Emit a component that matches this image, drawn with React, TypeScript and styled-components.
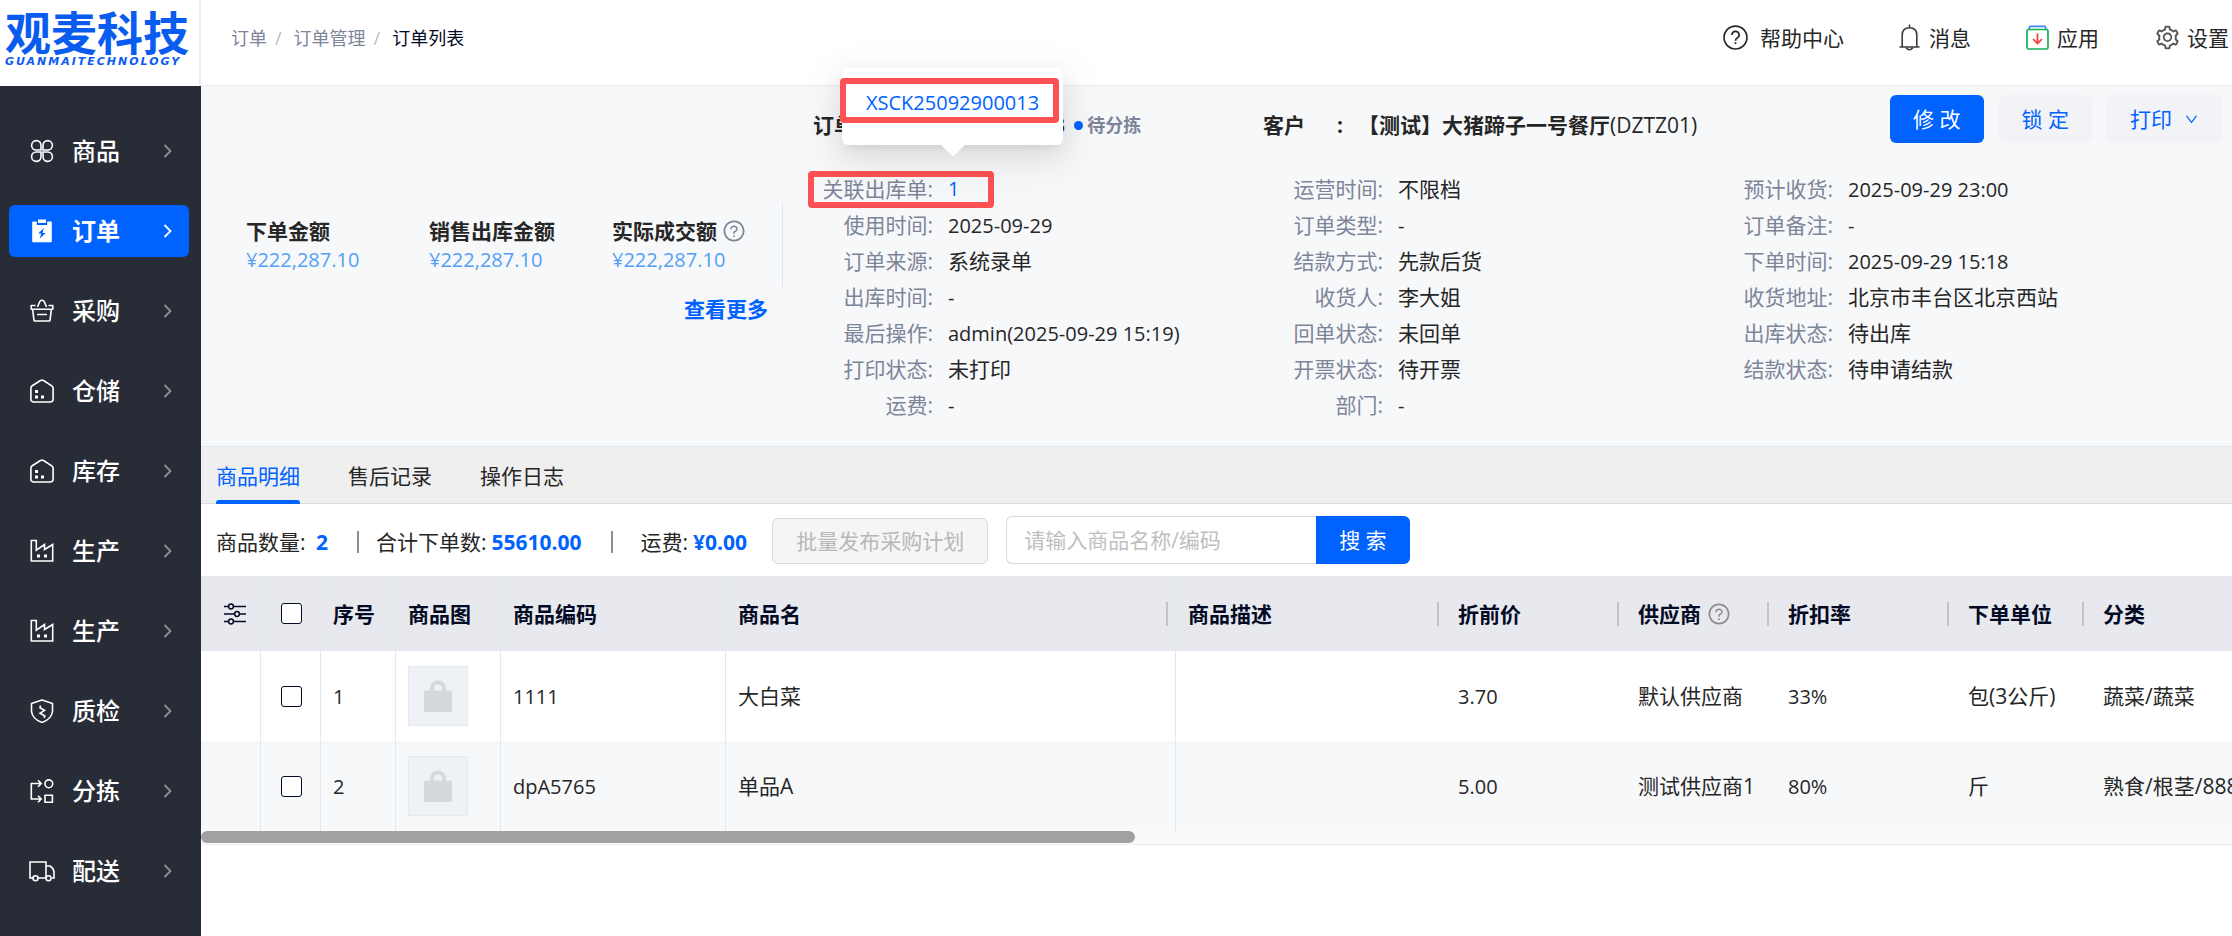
import React from 'react';
import styled, { createGlobalStyle, css } from 'styled-components';
import { AiOutlineDown, AiOutlineQuestionCircle, AiOutlineSetting } from 'react-icons/ai';

const BLUE = '#0062ff';
const INK = '#262626';
const MUTED = '#7d8599';
const NAVY = '#030a24';
const RED = '#fe5153';

const GlobalStyle = createGlobalStyle`
  *, *::before, *::after { box-sizing: border-box; }
  body {
    margin: 0;
    background: #fff;
    color: ${INK};
    font: 21px/28px 'Open Sans', 'Noto Sans CJK SC', sans-serif;
    overflow-x: hidden;
  }
  button, input { font: inherit; }
  a { color: inherit; text-decoration: none; }
`;

const Shell = styled.div`
  display: grid;
  grid-template-columns: 201px minmax(0, 1fr);
  min-height: 100vh;
`;

/* ---------- sidebar ---------- */

const Sidebar = styled.aside`
  display: flex;
  flex-direction: column;
  background: #282c37;
`;

const Logo = styled.a`
  display: flex;
  flex-direction: column;
  height: 86px;
  padding: 6px 0 0 5px;
  background: #fff;
  border-right: 2px solid #e8ebf3;
  color: #0a5cf0;
  white-space: nowrap;
`;

const LogoName = styled.span`
  font: 700 46px/48px 'Noto Sans CJK SC', sans-serif;
`;

const LogoLatin = styled.span`
  font: italic 700 11px/16px 'DejaVu Sans', sans-serif;
  letter-spacing: 2px;
`;

const Menu = styled.nav`
  display: flex;
  flex-direction: column;
  gap: 28px;
  padding: 39px 12px 39px 9px;
`;

const MenuItem = styled.a<{ $active?: boolean }>`
  display: flex;
  align-items: center;
  height: 52px;
  padding: 0 16px 0 21px;
  border-radius: 6px;
  color: #fff;
  font-size: 24px;
  font-weight: 500;
  > svg { color: #8f9197; }
  ${(p) =>
    p.$active &&
    css`
      background: ${BLUE};
      font-weight: 700;
      > svg { color: #fff; }
    `}
`;

const IconSlot = styled.span`
  display: flex;
  justify-content: center;
  width: 24px;
  svg { flex: none; }
`;

const MenuText = styled.span`
  flex: 1;
  padding-left: 18px;
`;

/* ---------- top bar ---------- */

const Main = styled.main`
  display: flex;
  flex-direction: column;
  min-width: 0;
`;

const TopBar = styled.header`
  display: flex;
  align-items: center;
  justify-content: space-between;
  height: 86px;
  padding: 0 3px 10px 30px;
  border-bottom: 1px solid #e8ebf0;
  white-space: nowrap;
`;

const Crumbs = styled.nav`
  display: flex;
  gap: 12px;
  font-size: 18px;
  color: ${MUTED};
`;

const Slash = styled.span`
  margin-left: -4px;
  color: #b9bdc7;
`;

const CurrentCrumb = styled.span`
  color: ${NAVY};
`;

const Tools = styled.div`
  display: flex;
  gap: 55px;
`;

const Tool = styled.a<{ $gap: number }>`
  display: flex;
  align-items: center;
  gap: ${(p) => p.$gap}px;
`;

/* ---------- order summary ---------- */

const Summary = styled.section`
  display: grid;
  grid-template-columns: 582px minmax(0, 1fr);
  background: #f7f8fa;
  border-bottom: 1px solid #e2e6f0;
`;

const Totals = styled.div`
  padding-top: 116px;
`;

const TotalRow = styled.div`
  display: grid;
  grid-template-columns: 183px 183px 1fr;
  padding: 15px 0 12px 45px;
  border-right: 1px solid #e2e6f0;
`;

const TotalTitle = styled.div`
  display: flex;
  align-items: center;
  gap: 5px;
  height: 28px;
  font-weight: 700;
  svg { color: ${MUTED}; }
`;

const TotalValue = styled.div`
  font-size: 20px;
  line-height: 30px;
  color: #559ff5;
`;

const MoreLink = styled.a`
  display: block;
  padding: 8px 15px 0 0;
  text-align: right;
  font-weight: 700;
  color: ${BLUE};
`;

const Details = styled.div`
  display: grid;
  grid-template-columns: minmax(0, 450px) minmax(0, 450px) minmax(0, 1fr);
  grid-template-rows: 85px;
  padding: 0 0 23px 15px;
  white-space: nowrap;
`;

const Heading = styled.div`
  display: flex;
  align-items: center;
  height: 78px;
  padding-left: 15px;
  font-weight: 700;
`;

const HeadingLabel = styled.span`
  width: 74px;
`;

const HeadingColon = styled.span`
  width: 21px;
`;

const Code = styled.span`
  font-weight: 500;
`;

const Status = styled.span`
  display: flex;
  align-items: center;
  gap: 4px;
  padding-left: 9px;
  font-size: 18px;
  color: ${MUTED};
  &::before {
    content: '';
    width: 9px;
    height: 9px;
    border-radius: 50%;
    background: ${BLUE};
  }
`;

const Actions = styled.div`
  display: flex;
  justify-content: flex-end;
  gap: 15px;
  padding: 9px 10px 0 0;
`;

const Button = styled.button<{ $kind: 'primary' | 'soft' | 'search' }>`
  display: flex;
  align-items: center;
  justify-content: center;
  gap: 12px;
  height: 48px;
  padding: 0 23px;
  border: 0;
  border-radius: ${(p) => (p.$kind === 'search' ? '0 6px 6px 0' : '6px')};
  background: ${(p) => (p.$kind === 'soft' ? '#f1f3f6' : BLUE)};
  color: ${(p) => (p.$kind === 'soft' ? BLUE : '#fff')};
  white-space: nowrap;
`;

const FieldList = styled.dl`
  margin: 0;
`;

const Field = styled.div`
  position: relative;
  display: grid;
  grid-template-columns: 135px minmax(0, 1fr);
  gap: 15px;
  height: 36px;
  line-height: 36px;
  dt { text-align: right; color: ${MUTED}; }
  dd { margin: 0; }
`;

const Latin = styled.span`
  font-size: 20px;
`;

const RelatedLink = styled.div`
  position: relative;
  width: fit-content;
  height: 36px;
  color: ${BLUE};
  font-size: 20px;
`;

const RowMark = styled.span`
  position: absolute;
  inset: 0 auto auto 10px;
  width: 186px;
  height: 37px;
  border: 6px solid ${RED};
  border-radius: 4px;
`;

const Popover = styled.div`
  position: absolute;
  z-index: 2;
  left: -106px;
  bottom: 62px;
  width: 221px;
  height: 77px;
  padding: 17px 0 0 24px;
  border-radius: 6px;
  background: #fff;
  box-shadow: 0 9px 24px rgba(0, 0, 0, 0.08), 0 5px 9px -6px rgba(0, 0, 0, 0.12),
    0 14px 42px 12px rgba(0, 0, 0, 0.05);
  &::before {
    content: '';
    position: absolute;
    left: 50%;
    bottom: -8px;
    width: 18px;
    height: 18px;
    border-radius: 2px;
    background: #fff;
    transform: translateX(-50%) rotate(45deg);
  }
  a { position: relative; display: block; line-height: 36px; }
`;

const PopoverMark = styled.span`
  position: absolute;
  top: 10px;
  left: -2px;
  width: 219px;
  height: 45px;
  border: 6px solid ${RED};
  border-radius: 4px;
`;

/* ---------- tabs and toolbar ---------- */

const Tabs = styled.div`
  display: flex;
  gap: 48px;
  height: 57px;
  padding: 0 15px;
  background: #efefef;
  border-bottom: 1px solid #dcdcdc;
`;

const Tab = styled.button<{ $active?: boolean }>`
  position: relative;
  height: 57px;
  padding: 0;
  border: 0;
  background: none;
  color: ${(p) => (p.$active ? BLUE : INK)};
  &::after {
    content: '';
    position: absolute;
    inset: auto 0 0;
    height: 4px;
    border-radius: 3px 3px 0 0;
    background: ${(p) => (p.$active ? BLUE : 'transparent')};
  }
`;

const Toolbar = styled.div`
  display: flex;
  align-items: center;
  height: 72px;
  padding: 0 15px;
  white-space: nowrap;
`;

const Figures = styled.div`
  display: flex;
  align-items: center;
  padding-top: 3px;
`;

const Figure = styled.span`
  display: flex;
  align-items: baseline;
  gap: 5px;
`;

const Amount = styled.strong`
  color: ${BLUE};
`;

const Bar = styled.i<{ $after: number }>`
  width: 2px;
  height: 22px;
  margin: 0 ${(p) => p.$after}px 0 29px;
  background: #8a8f96;
`;

const BatchButton = styled.button`
  height: 46px;
  margin: 2px 18px 0 25px;
  padding: 0 23px;
  border: 1px solid #d9d9d9;
  border-radius: 6px;
  background: #f5f5f5;
  color: #b8b8b8;
`;

const SearchBox = styled.form`
  display: flex;
`;

const SearchInput = styled.input`
  width: 310px;
  height: 48px;
  padding: 0 17px;
  border: 1px solid #d9d9d9;
  border-right: 0;
  border-radius: 6px 0 0 6px;
  outline: 0;
  color: ${INK};
  &::placeholder { color: #bfbfbf; opacity: 1; }
`;

/* ---------- table ---------- */

const TableWrap = styled.div`
  overflow: hidden;
  border-bottom: 1px solid #eaecf2;
  background: #fafafa;
`;

const Table = styled.table`
  width: 100%;
  table-layout: fixed;
  border-spacing: 0;
  white-space: nowrap;
  th, td { padding: 0 12px; text-align: left; overflow: hidden; }
  th { position: relative; height: 75px; background: #e8e9ee; color: ${NAVY}; font-weight: 700; }
  td { height: 90px; background: #fff; }
  tbody tr:nth-child(even) td { background: #f7f8fa; }
  th:nth-child(-n + 6), td:nth-child(-n + 6) { border-right: 1px solid #e4e8f1; }
  th:nth-child(1) { padding: 0 0 0 8px; }
  th:nth-child(2), td:nth-child(2) { padding: 0 0 0 2px; }
`;

const Handle = styled.i`
  position: absolute;
  top: 26px;
  right: 7px;
  width: 2px;
  height: 24px;
  background: #c3c4c8;
`;

const HeadText = styled.span`
  display: flex;
  align-items: center;
  gap: 6px;
  svg { color: #8c8c8c; }
`;

const Centered = styled.span`
  display: flex;
  align-items: center;
  justify-content: center;
`;

const Checkbox = styled.input`
  appearance: none;
  width: 21px;
  height: 21px;
  margin: 0;
  border: 1px solid ${NAVY};
  border-radius: 3px;
  background: #fff;
`;

const Thumb = styled.span`
  display: flex;
  align-items: center;
  justify-content: center;
  width: 60px;
  height: 60px;
  border: 1px solid #e6e9f1;
  background: #eef1f6;
`;

const ScrollThumb = styled.div`
  width: 46%;
  height: 12px;
  margin-bottom: 1px;
  border-radius: 6px;
  background: #a1a1a1;
`;

/* ---------- icons ---------- */

const Glyph = ({ children, size = 24, width = 1.6 }: { children: React.ReactNode; size?: number; width?: number }) => (
  <svg width={size} height={size} viewBox="0 0 24 24" fill="none" stroke="currentColor" strokeWidth={width} aria-hidden="true">
    {children}
  </svg>
);

const Goods = (
  <Glyph>
    <path d="M11 11H6.2A4.7 4.7 0 1 1 11 6.2zM13 11V6.2A4.7 4.7 0 1 1 17.8 11zM11 13v4.8A4.7 4.7 0 1 1 6.2 13zM13 13h4.8A4.7 4.7 0 1 1 13 17.8z" />
  </Glyph>
);

const Orders = (
  <Glyph>
    <path d="M3 2.500h3.800v3.500h10.400V2.500H21q.8 0 .8.800V22.500q0 .8-.8.800H3q-.8 0-.8-.8V3.300q0-.8.8-.8z" fill="currentColor" stroke="none" />
    <path d="M8 .5h8v3.500H8z" fill="currentColor" stroke="none" />
    <path d="M13.800 9L8.200 14.400h3l-1.400 5L15.700 14h-3.200z" fill={BLUE} stroke="none" />
  </Glyph>
);

const Purchase = (
  <Glyph>
    <path d="M5.500 6.500H1.200v3.700h1.400L4 21.300q.1.700.8.700h14.400q.7 0 .8-.7l1.400-11.100h1.400V6.500h-4.300M2.600 10.200h18.800M7 15.500h10M7.500 8L9.800 2.500q2.200-2.400 4.400 0L16.500 8" strokeLinejoin="round" />
  </Glyph>
);

const Warehouse = (
  <Glyph>
    <path d="M.9 9.200q0-1.600 1.300-2.400l8.300-5.300q1.500-.9 3 0l8.300 5.300q1.300.8 1.300 2.400V20q0 3-3 3H3.900q-3 0-3-3z" />
    <path d="M5 11h3v3H5zM5 16.500h3v3H5zM11 16.500h3v3h-3z" fill="currentColor" stroke="none" />
  </Glyph>
);

const Factory = (
  <Glyph>
    <path d="M1.300 22V1.500h5v9.700L14.500 5.500v5L22.700 5.500V22z" />
    <path d="M7 15.500h3v3H7zM14 15.500h3v3h-3z" fill="currentColor" stroke="none" />
  </Glyph>
);

const Quality = (
  <Glyph>
    <path d="M12 1l10.500 3.500V12.500Q21.500 20 12 23.500 2.500 20 1.500 12.500V4.500z" strokeLinejoin="round" />
    <path d="M10.500 6.500l-.5 2.300 4.500 2.500-4.500 3 4.800 2.700-.6 2" />
  </Glyph>
);

const Sorting = (
  <Glyph>
    <path d="M11 4.500H1.300v15.500H11M8 1.200L11.200 4.500 8 7.800M8 16.700l3.200 3.300L8 23.300" />
    <circle cx="18.800" cy="4.800" r="3.900" />
    <path d="M15 16.200h7.400v7H15z" />
  </Glyph>
);

const Delivery = (
  <svg width="26" height="24" viewBox="0 0 26 24" fill="none" stroke="currentColor" strokeWidth="1.600" aria-hidden="true">
    <path d="M4 19H1V3h16v16H9M17 7h4q4 2.500 4 7v5h-2M17 19h1" />
    <circle cx="6.500" cy="19.300" r="2.500" />
    <circle cx="19.500" cy="19.300" r="2.500" />
  </svg>
);

const Chevron = () => (
  <svg width="10" height="14" viewBox="0 0 10 14" fill="none" stroke="currentColor" strokeWidth="1.800" aria-hidden="true">
    <path d="M1.500 1l6 6-6 6" />
  </svg>
);

const Help = (
  <Glyph size={25}>
    <circle cx="12" cy="12" r="11" />
    <path d="M8.600 9.500a3.400 3.400 0 1 1 5 3q-1.600.9-1.600 2.500M12 16.500v1.800" />
  </Glyph>
);

const Bell = (
  <svg width="21" height="27" viewBox="0 0 21 27" fill="none" stroke="#3c3c3c" strokeWidth="1.600" aria-hidden="true">
    <path d="M.5 23h20M3.200 23V11.200q0-7.400 7.300-7.400t7.300 7.400V23M10.500.5v3" />
    <path d="M7 23.500q3.500 4.500 7 0" />
  </svg>
);

const Apps = (
  <svg width="23" height="25" viewBox="0 0 23 25" fill="none" strokeWidth="1.700" aria-hidden="true">
    <path d="M2.500 5L4 1.300h15L20.500 5" stroke="#3f86ff" />
    <rect x="1" y="4.500" width="21" height="19.500" rx="1.500" stroke="#12b15c" />
    <path d="M11.500 8.500v10M7 14l4.500 4.500L16 14" stroke="#fb3b3b" />
  </svg>
);

const Sliders = (
  <svg width="22" height="22" viewBox="0 0 22 22" fill="none" stroke={NAVY} strokeWidth="1.500" aria-hidden="true">
    <path d="M0 3.500h4.500M9.500 3.500H22M0 11h10.500M15.500 11H22M0 18.500h4.500M9.500 18.500H22" />
    <circle cx="7" cy="3.500" r="2.400" />
    <circle cx="13" cy="11" r="2.400" />
    <circle cx="7" cy="18.500" r="2.400" />
  </svg>
);

const Lock = () => (
  <svg width="28" height="32" viewBox="0 0 28 32" fill="none" aria-hidden="true">
    <rect y="10.500" width="28" height="21.500" rx="1" fill="#d5d9dc" />
    <path d="M8 11V8.500a6 6 0 0 1 12 0V11" stroke="#d5d9dc" strokeWidth="4" />
  </svg>
);

/* ---------- data ---------- */

const menu = [
  { text: '商品', icon: Goods },
  { text: '订单', icon: Orders, active: true },
  { text: '采购', icon: Purchase },
  { text: '仓储', icon: Warehouse },
  { text: '库存', icon: Warehouse },
  { text: '生产', icon: Factory },
  { text: '生产', icon: Factory },
  { text: '质检', icon: Quality },
  { text: '分拣', icon: Sorting },
  { text: '配送', icon: Delivery },
];

const fields: [string, string][][] = [
  [
    ['使用时间', '2025-09-29'],
    ['订单来源', '系统录单'],
    ['出库时间', '-'],
    ['最后操作', 'admin(2025-09-29 15:19)'],
    ['打印状态', '未打印'],
    ['运费', '-'],
  ],
  [
    ['运营时间', '不限档'],
    ['订单类型', '-'],
    ['结款方式', '先款后货'],
    ['收货人', '李大姐'],
    ['回单状态', '未回单'],
    ['开票状态', '待开票'],
    ['部门', '-'],
  ],
  [
    ['预计收货', '2025-09-29 23:00'],
    ['订单备注', '-'],
    ['下单时间', '2025-09-29 15:18'],
    ['收货地址', '北京市丰台区北京西站'],
    ['出库状态', '待出库'],
    ['结款状态', '待申请结款'],
  ],
];

const rows = [
  { code: '1111', name: '大白菜', price: '3.70', supplier: '默认供应商', rate: '33%', unit: '包(3公斤)', kind: '蔬菜/蔬菜' },
  { code: 'dpA5765', name: '单品A', price: '5.00', supplier: '测试供应商1', rate: '80%', unit: '斤', kind: '熟食/根茎/888' },
];

const widths = [60, 60, 75, 105, 225, 450, 270, 180, 150, 180, 135];

const isLatin = (s: string) => /^[\x20-\x7e]+$/.test(s);

const Text = ({ children }: { children: string }) => (isLatin(children) ? <Latin>{children}</Latin> : <>{children}</>);

const FieldRow = ({ label, value }: { label: string; value: string }) => (
  <Field>
    <dt>{label}:</dt>
    <dd>
      <Text>{value}</Text>
    </dd>
  </Field>
);

export default function App() {
  return (
    <Shell>
      <GlobalStyle />
      <Sidebar>
        <Logo href="#">
          <LogoName>观麦科技</LogoName>
          <LogoLatin>GUANMAITECHNOLOGY</LogoLatin>
        </Logo>
        <Menu>
          {menu.map((m, i) => (
            <MenuItem key={i} href="#" $active={m.active}>
              <IconSlot>{m.icon}</IconSlot>
              <MenuText>{m.text}</MenuText>
              <Chevron />
            </MenuItem>
          ))}
        </Menu>
      </Sidebar>

      <Main>
        <TopBar>
          <Crumbs>
            <a href="#">订单</a>
            <Slash>/</Slash>
            <a href="#">订单管理</a>
            <Slash>/</Slash>
            <CurrentCrumb>订单列表</CurrentCrumb>
          </Crumbs>
          <Tools>
            <Tool href="#" $gap={12}>{Help}帮助中心</Tool>
            <Tool href="#" $gap={9}>{Bell}消息</Tool>
            <Tool href="#" $gap={8}>{Apps}应用</Tool>
            <Tool href="#" $gap={6}><AiOutlineSetting size={27} color="#555" />设置</Tool>
          </Tools>
        </TopBar>

        <Summary>
          <Totals>
            <TotalRow>
              <div>
                <TotalTitle>下单金额</TotalTitle>
                <TotalValue>¥222,287.10</TotalValue>
              </div>
              <div>
                <TotalTitle>销售出库金额</TotalTitle>
                <TotalValue>¥222,287.10</TotalValue>
              </div>
              <div>
                <TotalTitle>实际成交额<AiOutlineQuestionCircle size={24} /></TotalTitle>
                <TotalValue>¥222,287.10</TotalValue>
              </div>
            </TotalRow>
            <MoreLink href="#">查看更多</MoreLink>
          </Totals>

          <Details>
            <Heading>
              <HeadingLabel>订单号</HeadingLabel>
              <HeadingColon>:</HeadingColon>
              PL25092900013
              <Status>待分拣</Status>
            </Heading>
            <Heading>
              <HeadingLabel>客户</HeadingLabel>
              <HeadingColon>:</HeadingColon>
              【测试】大猪蹄子一号餐厅<Code>(DZTZ01)</Code>
            </Heading>
            <Actions>
              <Button type="button" $kind="primary">修 改</Button>
              <Button type="button" $kind="soft">锁 定</Button>
              <Button type="button" $kind="soft">打印<AiOutlineDown size={15} /></Button>
            </Actions>
            {fields.map((list, i) => (
              <FieldList key={i}>
                {i === 0 && (
                  <Field>
                    <dt>关联出库单:</dt>
                    <dd>
                      <RelatedLink>
                        <a href="#">1</a>
                        <Popover>
                          <a href="#">XSCK25092900013</a>
                          <PopoverMark />
                        </Popover>
                      </RelatedLink>
                      <RowMark />
                    </dd>
                  </Field>
                )}
                {list.map(([label, value]) => (
                  <FieldRow key={label} label={label} value={value} />
                ))}
              </FieldList>
            ))}
          </Details>
        </Summary>

        <Tabs role="tablist">
          <Tab type="button" role="tab" aria-selected $active>商品明细</Tab>
          <Tab type="button" role="tab">售后记录</Tab>
          <Tab type="button" role="tab">操作日志</Tab>
        </Tabs>

        <Toolbar>
          <Figures>
            <Figure>商品数量: <Amount>&nbsp;2</Amount></Figure>
            <Bar $after={17} />
            <Figure>合计下单数: <Amount>55610.00</Amount></Figure>
            <Bar $after={28} />
            <Figure>运费: <Amount>¥0.00</Amount></Figure>
          </Figures>
          <BatchButton type="button" disabled>批量发布采购计划</BatchButton>
          <SearchBox onSubmit={(e) => e.preventDefault()}>
            <SearchInput type="text" aria-label="商品搜索" placeholder="请输入商品名称/编码" />
            <Button type="submit" $kind="search">搜 索</Button>
          </SearchBox>
        </Toolbar>

        <TableWrap>
          <Table>
            <colgroup>
              {widths.map((w, i) => (
                <col key={i} width={w} />
              ))}
              <col />
            </colgroup>
            <thead>
              <tr>
                <th><Centered>{Sliders}</Centered></th>
                <th><Centered><Checkbox type="checkbox" aria-label="全选" /></Centered></th>
                <th>序号</th>
                <th>商品图</th>
                <th>商品编码</th>
                <th>商品名<Handle /></th>
                <th>商品描述<Handle /></th>
                <th>折前价<Handle /></th>
                <th><HeadText>供应商<AiOutlineQuestionCircle size={24} /></HeadText><Handle /></th>
                <th>折扣率<Handle /></th>
                <th>下单单位<Handle /></th>
                <th>分类</th>
              </tr>
            </thead>
            <tbody>
              {rows.map((r, i) => (
                <tr key={r.code}>
                  <td />
                  <td><Centered><Checkbox type="checkbox" aria-label={`选择 ${r.name}`} /></Centered></td>
                  <td><Text>{String(i + 1)}</Text></td>
                  <td><Thumb><Lock /></Thumb></td>
                  <td><Text>{r.code}</Text></td>
                  <td>{r.name}</td>
                  <td />
                  <td><Text>{r.price}</Text></td>
                  <td>{r.supplier}</td>
                  <td><Text>{r.rate}</Text></td>
                  <td>{r.unit}</td>
                  <td>{r.kind}</td>
                </tr>
              ))}
            </tbody>
          </Table>
          <ScrollThumb />
        </TableWrap>
      </Main>
    </Shell>
  );
}
